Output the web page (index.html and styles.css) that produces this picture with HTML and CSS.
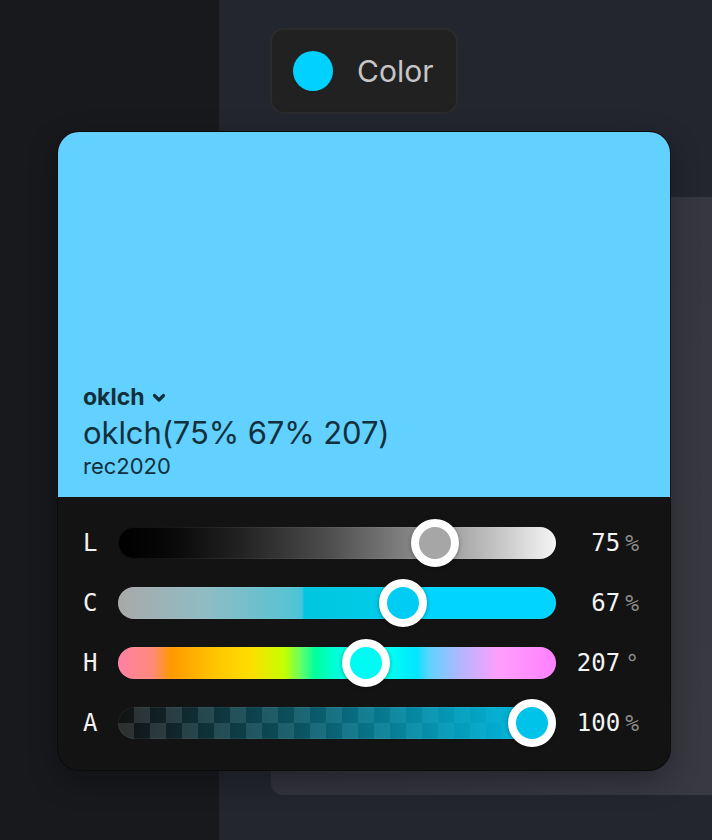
FILE: index.html
```html
<!DOCTYPE html>
<html lang="en">
<head>
  <meta charset="UTF-8">
  <title>Color picker</title>
  <link rel="stylesheet" href="styles.css">
</head>
<body>
  <div class="sheet"></div>

  <button class="trigger" type="button">
    <span class="trigger-dot"></span>
    <span class="trigger-label">Color</span>
  </button>

  <div class="picker">
    <div class="swatch">
      <div class="space-select">
        oklch
        <svg class="chevron" width="14" height="10" viewBox="0 0 14 10">
          <path d="M2.5 2.5 L7 7 L11.5 2.5" fill="none" stroke="currentColor" stroke-width="3.2" stroke-linecap="round" stroke-linejoin="round"/>
        </svg>
      </div>
      <div class="swatch-value">oklch(75% 67% 207)</div>
      <div class="swatch-gamut">rec2020</div>
    </div>

    <div class="channels">
      <div class="channel">
        <span class="channel-name">L</span>
        <div class="track track-l">
          <span class="thumb thumb-l" style="--v: 0.75"></span>
        </div>
        <span class="channel-value">75<small>%</small></span>
      </div>
      <div class="channel">
        <span class="channel-name">C</span>
        <div class="track track-c">
          <span class="thumb thumb-c" style="--v: 0.67"></span>
        </div>
        <span class="channel-value">67<small>%</small></span>
      </div>
      <div class="channel">
        <span class="channel-name">H</span>
        <div class="track track-h">
          <span class="thumb thumb-h" style="--v: 0.575"></span>
        </div>
        <span class="channel-value">207<small>°</small></span>
      </div>
      <div class="channel">
        <span class="channel-name">A</span>
        <div class="track track-a">
          <span class="thumb thumb-a" style="--v: 1"></span>
        </div>
        <span class="channel-value">100<small>%</small></span>
      </div>
    </div>
  </div>
</body>
</html>
```

FILE: styles.css
```css
:root {
  --page-left: #18191d;
  --page-right: #23262e;
  --swatch: #62d1ff;
  --swatch-text: #12303c;
  --panel: #131313;
  --mono: 'DejaVu Sans Mono', monospace;
}
html, body {
  height: 100%;
}
body {
  margin: 0;
  position: relative;
  overflow: hidden;
  font-family: 'Inter', sans-serif;
  background: linear-gradient(90deg, var(--page-left) 219px, var(--page-right) 219px);
  padding-top: 28px;
  box-sizing: border-box;
}

/* backdrop sheet behind the popover */
.sheet {
  position: absolute;
  left: 271px;
  top: 197px;
  right: 0;
  bottom: 45px;
  background: linear-gradient(100deg, #30313a, #383942);
  border-radius: 0 0 0 12px;
}

.trigger {
  display: flex;
  align-items: center;
  gap: 24px;
  width: 188px;
  height: 86px;
  margin-left: 270px;
  padding: 0 0 0 21px;
  box-sizing: border-box;
  background: #212121;
  border: 2px solid #2b2b2d;
  border-radius: 14px;
  font: inherit;
  cursor: pointer;
}
.trigger-dot {
  width: 40px;
  height: 40px;
  border-radius: 50%;
  background: #00d1ff;
}
.trigger-label {
  font-size: 30px;
  color: #c6c6c8;
}

.picker {
  position: relative;
  width: 614px;
  height: 640px;
  margin: 17px 0 0 57px;
  box-sizing: border-box;
  border: 1px solid #0b0b0c;
  border-radius: 22px;
  background: var(--panel);
  overflow: hidden;
  box-shadow: 0 10px 30px rgba(0,0,0,0.3);
  display: flex;
  flex-direction: column;
}

.swatch {
  height: 365px;
  flex: none;
  background: var(--swatch);
  color: var(--swatch-text);
  display: flex;
  flex-direction: column;
  justify-content: flex-end;
  padding: 0 25px 19px;
  box-sizing: border-box;
}
.space-select {
  display: flex;
  align-items: center;
  gap: 7px;
  font-size: 23px;
  font-weight: 700;
  line-height: 24px;
  margin-bottom: 9px;
}
.chevron {
  margin-top: 1px;
}
.swatch-value {
  font-size: 31px;
  line-height: 30px;
  letter-spacing: -0.1px;
  margin-bottom: 6px;
}
.swatch-gamut {
  font-size: 22px;
  line-height: 24px;
}

.channels {
  flex: 1;
  padding: 16px 31px 0 25px;
}
.channel {
  display: grid;
  grid-template-columns: 35px 438px 1fr;
  align-items: center;
  height: 60px;
}
.channel-name {
  font-family: var(--mono);
  font-size: 24px;
  color: #f2f2f2;
}
.channel-value {
  font-family: var(--mono);
  font-size: 24px;
  color: #f4f4f4;
  text-align: right;
}
.channel-value small {
  font-size: 23px;
  color: #8c8c8c;
  margin-left: 5px;
}

.track {
  position: relative;
  height: 32px;
  border-radius: 16px;
  box-shadow: inset 0 0 0 1px rgba(255,255,255,0.06);
}
.track-l {
  background: linear-gradient(90deg, #000 0%, #080808 12%, #222 28%, #4d4d4d 48%, #7c7c7c 64%, #b4b4b4 82%, #f5f5f5 100%);
}
.track-c {
  background: linear-gradient(90deg, #a9a9a9 0%, #8fbcc4 20%, #5cc2d2 38%, #48c4d8 42%, #00c6df 42.5%, #00cbe9 60%, #00d4ff 67%, #00d4ff 100%);
}
.track-h {
  background: linear-gradient(90deg, #ff80a6 0%, #ff8a78 8%, #ff9800 12%, #ffc400 22%, #ffdd00 30%, #c4ff00 38%, #5dff6c 42%, #00ff9c 45%, #00ffdc 50%, #00fff2 62%, #00e6ff 68%, #5cd3ff 71%, #a8baff 77%, #ff9efc 87%, #ff80ff 100%);
}
.track-a {
  background:
    linear-gradient(90deg, rgba(0,195,234,0) 0%, rgba(0,195,234,0.35) 40%, rgba(0,195,234,0.75) 75%, #00c3ea 100%),
    repeating-conic-gradient(#2e2e2e 0 25%, #121212 0 50%) 0 0 / 32px 32px;
}

.thumb {
  position: absolute;
  top: -8px;
  left: calc(var(--v) * (100% - 48px));
  width: 48px;
  height: 48px;
  box-sizing: border-box;
  border: 8px solid #fff;
  border-radius: 50%;
  box-shadow: 0 1px 4px rgba(0,0,0,0.35);
}
.thumb-l { background: #a6a6a6; }
.thumb-c { background: #00ccf4; }
.thumb-h { background: #00fbf4; }
.thumb-a { background: #00c3ea; }
```
